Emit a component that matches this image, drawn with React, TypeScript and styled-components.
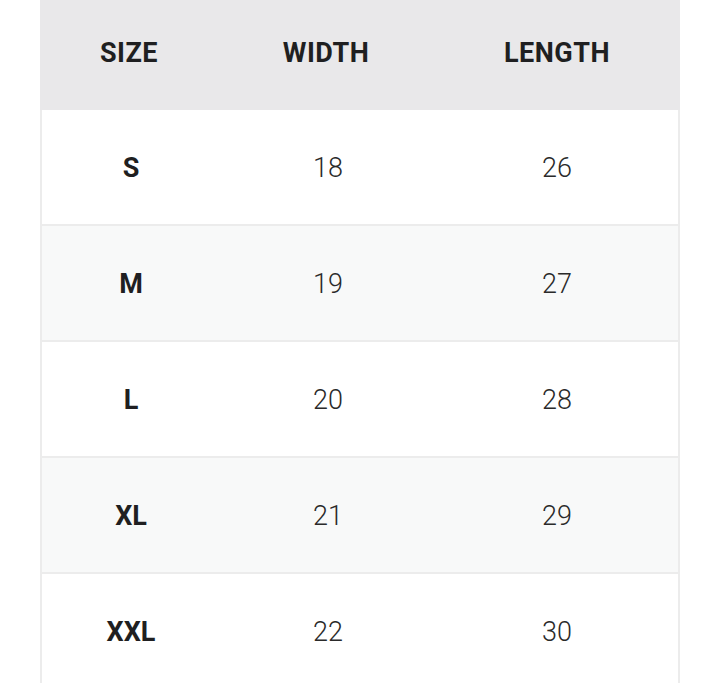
import React from "react";
import styled, {createGlobalStyle} from "styled-components";

const GlobalStyle = createGlobalStyle`
  html, body {
    margin: 0;
    padding: 0;
    background: #ffffff;
    font-family: Roboto, "Noto Sans", sans-serif;
  }
`

interface SizeRow {
    size: string
    width: number
    length: number
}

const rows: SizeRow[] = [
    {size: "S", width: 18, length: 26},
    {size: "M", width: 19, length: 27},
    {size: "L", width: 20, length: 28},
    {size: "XL", width: 21, length: 29},
    {size: "XXL", width: 22, length: 30},
]

const Table = styled.div`
  margin-left: 40px;
  width: 640px;
  display: flex;
  flex-direction: column;
`

const Row = styled.div<{striped?: boolean}>`
  display: grid;
  grid-template-columns: 178px 216px 1fr;
  height: 116px;
  align-items: center;
  background: ${props => props.striped ? "#f8f9f9" : "#ffffff"};
  border-left: 2px solid #ececec;
  border-right: 2px solid #ececec;
  border-bottom: 2px solid #ececec;
  box-sizing: border-box;
`

const HeaderRow = styled(Row)`
  height: 110px;
  background: #e9e8ea;
  border: none;
  padding-bottom: 4px;
`

const HeaderCell = styled.div`
  text-align: center;
  font-size: 27px;
  font-weight: 700;
  color: #1f1f21;
  letter-spacing: 0.5px;
`

const Cell = styled.div<{bold?: boolean}>`
  text-align: center;
  font-size: 27px;
  font-weight: ${props => props.bold ? 700 : 300};
  color: ${props => props.bold ? "#1f1f21" : "#2a2a2a"};
  padding-top: 2px;
`

export default function App() {
    return <>
        <GlobalStyle/>
        <Table>
            <HeaderRow>
                <HeaderCell>SIZE</HeaderCell>
                <HeaderCell>WIDTH</HeaderCell>
                <HeaderCell>LENGTH</HeaderCell>
            </HeaderRow>
            {rows.map((row, index) => <Row key={row.size} striped={index % 2 === 1}>
                <Cell bold>{row.size}</Cell>
                <Cell>{row.width}</Cell>
                <Cell>{row.length}</Cell>
            </Row>)}
        </Table>
    </>
}
